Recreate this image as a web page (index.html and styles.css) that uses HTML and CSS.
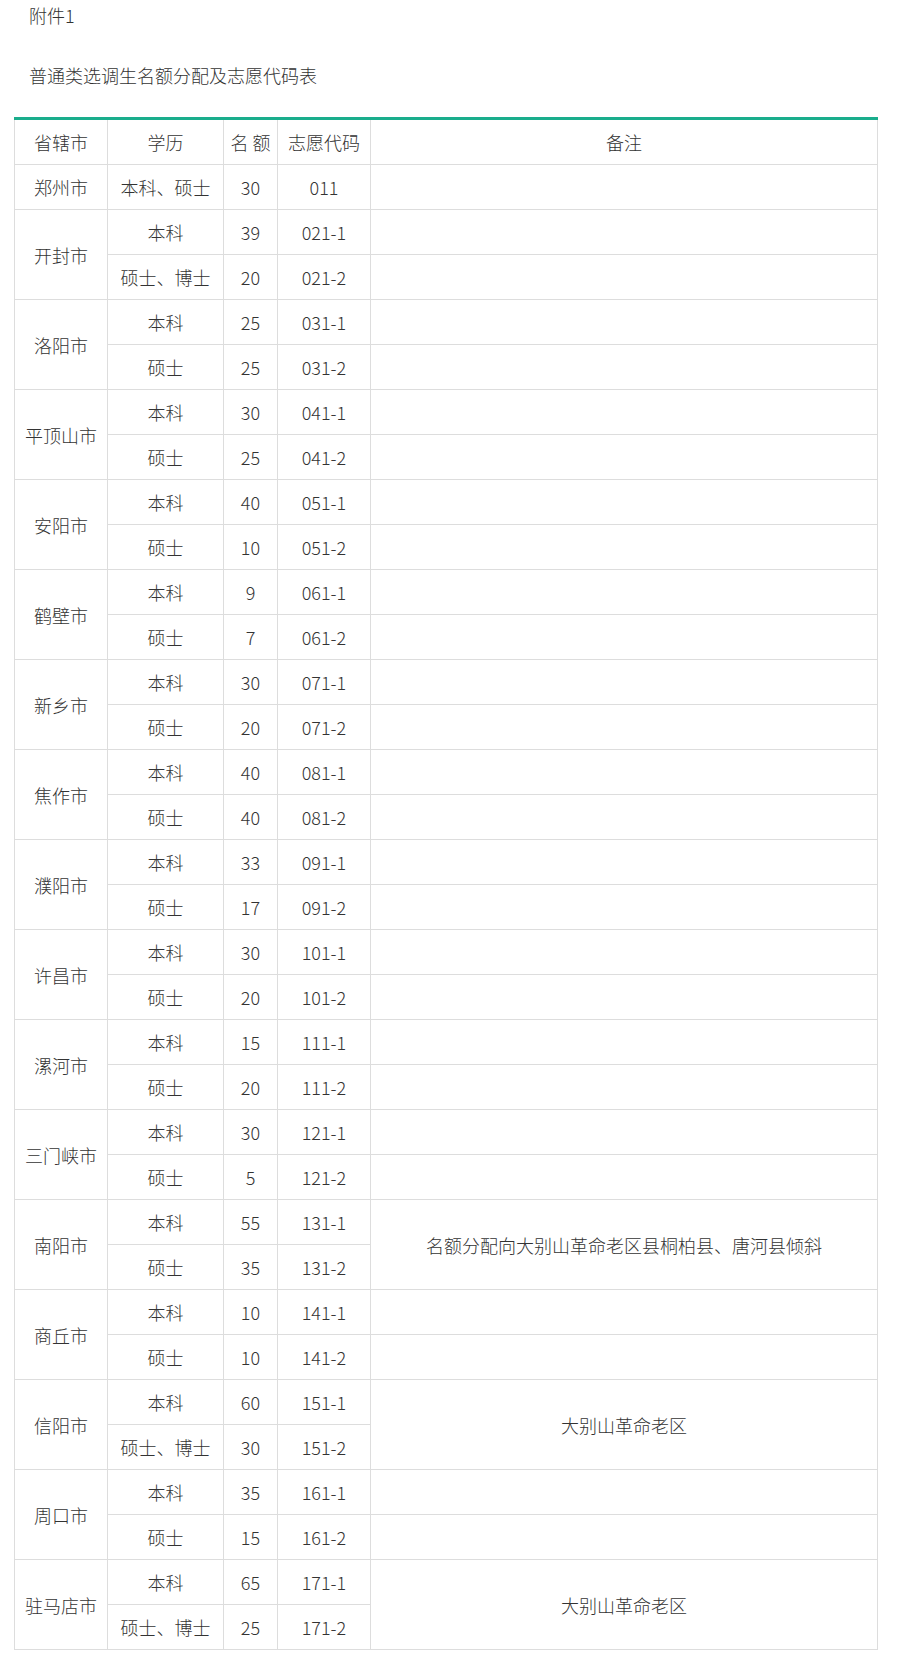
FILE: index.html
```html
<!DOCTYPE html>
<html lang="zh-CN">
<head>
<meta charset="utf-8">
<title>普通类选调生名额分配及志愿代码表</title>
<link rel="stylesheet" href="styles.css">
</head>
<body>
<div class="page">
  <p class="line">附件1</p>
  <p class="line title">普通类选调生名额分配及志愿代码表</p>
  <table class="quota">
    <colgroup>
      <col class="c-city"><col class="c-edu"><col class="c-num"><col class="c-code"><col class="c-note">
    </colgroup>
    <thead>
      <tr><th>省辖市</th><th>学历</th><th>名 额</th><th>志愿代码</th><th>备注</th></tr>
    </thead>
    <tbody>
      <tr><td>郑州市</td><td>本科、硕士</td><td>30</td><td>011</td><td></td></tr>
      <tr><td rowspan="2">开封市</td><td>本科</td><td>39</td><td>021-1</td><td></td></tr>
      <tr><td>硕士、博士</td><td>20</td><td>021-2</td><td></td></tr>
      <tr><td rowspan="2">洛阳市</td><td>本科</td><td>25</td><td>031-1</td><td></td></tr>
      <tr><td>硕士</td><td>25</td><td>031-2</td><td></td></tr>
      <tr><td rowspan="2">平顶山市</td><td>本科</td><td>30</td><td>041-1</td><td></td></tr>
      <tr><td>硕士</td><td>25</td><td>041-2</td><td></td></tr>
      <tr><td rowspan="2">安阳市</td><td>本科</td><td>40</td><td>051-1</td><td></td></tr>
      <tr><td>硕士</td><td>10</td><td>051-2</td><td></td></tr>
      <tr><td rowspan="2">鹤壁市</td><td>本科</td><td>9</td><td>061-1</td><td></td></tr>
      <tr><td>硕士</td><td>7</td><td>061-2</td><td></td></tr>
      <tr><td rowspan="2">新乡市</td><td>本科</td><td>30</td><td>071-1</td><td></td></tr>
      <tr><td>硕士</td><td>20</td><td>071-2</td><td></td></tr>
      <tr><td rowspan="2">焦作市</td><td>本科</td><td>40</td><td>081-1</td><td></td></tr>
      <tr><td>硕士</td><td>40</td><td>081-2</td><td></td></tr>
      <tr><td rowspan="2">濮阳市</td><td>本科</td><td>33</td><td>091-1</td><td></td></tr>
      <tr><td>硕士</td><td>17</td><td>091-2</td><td></td></tr>
      <tr><td rowspan="2">许昌市</td><td>本科</td><td>30</td><td>101-1</td><td></td></tr>
      <tr><td>硕士</td><td>20</td><td>101-2</td><td></td></tr>
      <tr><td rowspan="2">漯河市</td><td>本科</td><td>15</td><td>111-1</td><td></td></tr>
      <tr><td>硕士</td><td>20</td><td>111-2</td><td></td></tr>
      <tr><td rowspan="2">三门峡市</td><td>本科</td><td>30</td><td>121-1</td><td></td></tr>
      <tr><td>硕士</td><td>5</td><td>121-2</td><td></td></tr>
      <tr><td rowspan="2">南阳市</td><td>本科</td><td>55</td><td>131-1</td><td rowspan="2">名额分配向大别山革命老区县桐柏县、唐河县倾斜</td></tr>
      <tr><td>硕士</td><td>35</td><td>131-2</td></tr>
      <tr><td rowspan="2">商丘市</td><td>本科</td><td>10</td><td>141-1</td><td></td></tr>
      <tr><td>硕士</td><td>10</td><td>141-2</td><td></td></tr>
      <tr><td rowspan="2">信阳市</td><td>本科</td><td>60</td><td>151-1</td><td rowspan="2">大别山革命老区</td></tr>
      <tr><td>硕士、博士</td><td>30</td><td>151-2</td></tr>
      <tr><td rowspan="2">周口市</td><td>本科</td><td>35</td><td>161-1</td><td></td></tr>
      <tr><td>硕士</td><td>15</td><td>161-2</td><td></td></tr>
      <tr><td rowspan="2">驻马店市</td><td>本科</td><td>65</td><td>171-1</td><td rowspan="2">大别山革命老区</td></tr>
      <tr><td>硕士、博士</td><td>25</td><td>171-2</td></tr>
    </tbody>
  </table>
</div>
</body>
</html>
```

FILE: styles.css
```css
html, body {
  margin: 0;
  padding: 0;
  background: #ffffff;
}

body {
  font-family: "Noto Sans CJK SC", "Noto Sans", sans-serif;
  font-size: 18px;
  font-weight: 300;
  color: #333333;
}

.page {
  padding: 0 14px;
}

.line {
  margin: 0;
  padding-left: 15px;
  line-height: 30px;
}

.title {
  margin-top: 30px;
}

.quota {
  margin-top: 27px;
  width: 863px;
  table-layout: fixed;
  border-collapse: collapse;
  border-top: 3px solid #1aad8c;
}

.c-city { width: 93px; }
.c-edu { width: 116px; }
.c-num { width: 54px; }
.c-code { width: 93px; }
.c-note { width: 507px; }

.quota th,
.quota td {
  border: 1px solid #dddddd;
  height: 44px;
  padding: 0;
  line-height: 26px;
  text-align: center;
  vertical-align: middle;
  font-weight: 300;
  white-space: nowrap;
}

.quota thead th {
  border-top: 3px solid #1aad8c;
}
```
